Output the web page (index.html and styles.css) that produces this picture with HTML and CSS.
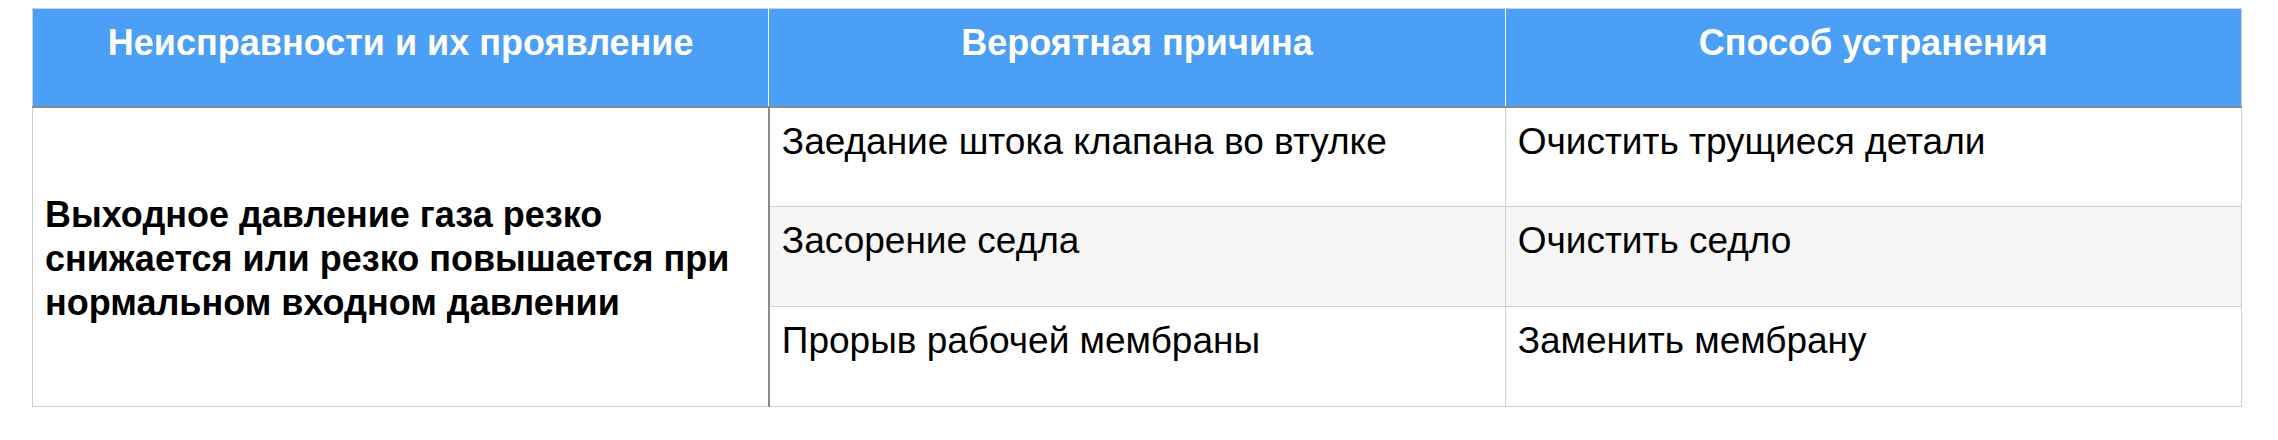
FILE: index.html
```html
<!DOCTYPE html>
<html lang="ru">
<head>
<meta charset="utf-8">
<title>Неисправности</title>
<link rel="stylesheet" href="styles.css">
</head>
<body>
<div class="wrap">
<table class="faults">
  <thead>
    <tr>
      <th>Неисправности и их проявление</th>
      <th>Вероятная причина</th>
      <th>Способ устранения</th>
    </tr>
  </thead>
  <tbody>
    <tr>
      <td class="symptom" rowspan="3">Выходное давление газа резко снижается или резко повышается при нормальном входном давлении</td>
      <td class="cause">Заедание штока клапана во втулке</td>
      <td>Очистить трущиеся детали</td>
    </tr>
    <tr class="alt">
      <td class="cause">Засорение седла</td>
      <td>Очистить седло</td>
    </tr>
    <tr>
      <td class="cause">Прорыв рабочей мембраны</td>
      <td>Заменить мембрану</td>
    </tr>
  </tbody>
</table>
</div>
</body>
</html>
```

FILE: styles.css
```css
html, body {
  margin: 0;
  padding: 0;
  background: #ffffff;
}
body {
  padding: 8px 0 0 0;
  font-family: "Liberation Sans", Arial, sans-serif;
}
.wrap {
  padding-left: 32px;
}
.faults {
  width: 2210px;
  border-collapse: collapse;
  table-layout: fixed;
  border: 1px solid #cfcfcf;
  font-size: 37px;
  line-height: 44px;
  color: #000;
}
.faults th {
  background: #4b9ff6;
  color: #ffffff;
  font-weight: bold;
  font-size: 36px;
  text-align: center;
  vertical-align: top;
  height: 98px;
  padding: 12px;
  box-sizing: border-box;
  border-left: 1px solid #ffffff;
  border-bottom: 2px solid #8a8a8a;
}
.faults th:first-child {
  border-left: 1px solid #cfcfcf;
}
.faults td {
  height: 100px;
  box-sizing: border-box;
  padding: 12px;
  vertical-align: top;
  text-align: left;
  border-top: 1px solid #cfcfcf;
  border-left: 1px solid #cfcfcf;
}
.faults td.symptom {
  vertical-align: middle;
  font-weight: bold;
  font-size: 36px;
  padding-top: 16px;
  padding-bottom: 12px;
}
.faults td.cause {
  border-left: 2px solid #8a8a8a;
}
.faults tr.alt td {
  background: #f6f6f6;
}
```
